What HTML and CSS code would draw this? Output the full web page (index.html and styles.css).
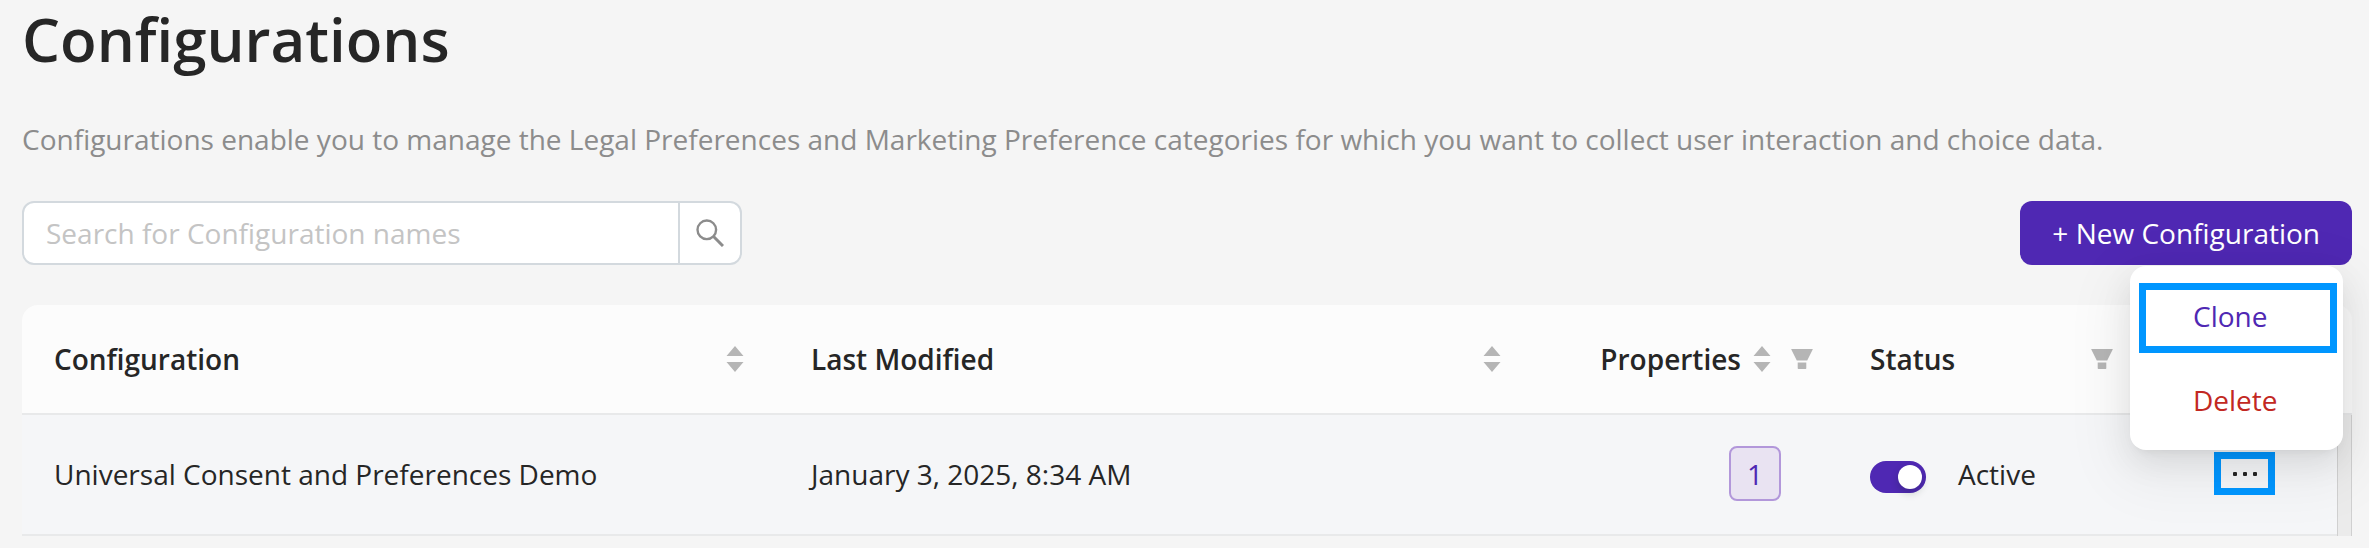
FILE: index.html
```
<!DOCTYPE html>
<html lang="en">
<head>
  <meta charset="UTF-8" />
  <meta name="viewport" content="width=device-width, initial-scale=1.0" />
  <title>Configurations</title>
  <link rel="stylesheet" href="styles.css">
</head>
<body>
  <svg width="0" height="0" class="sprite" aria-hidden="true">
    <symbol id="sort" viewBox="0 0 18 26">
      <path d="M9 0L17.500 10H.5zM.5 16h17L9 26z" />
    </symbol>
    <symbol id="filter" viewBox="0 0 22 20">
      <path d="M.4 0h21.200q.3.200.1.500L16.200 11.500H5.800L.3.500Q.1.200.4 0zM6.700 13.600h8.600v5.700q0 .7-.7.700H7.400q-.7 0-.7-.7z" />
    </symbol>
  </svg>

  <h1>Configurations</h1>
  <p class="description">Configurations enable you to manage the Legal Preferences and Marketing Preference categories for which you want to collect user interaction and choice data.</p>

  <div class="toolbar">
    <form class="search">
      <input type="text" placeholder="Search for Configuration names" aria-label="Search for Configuration names">
      <button type="button" aria-label="Search">
        <svg width="28" height="28" viewBox="0 0 28 28" fill="none" stroke="#8c8c8c" stroke-width="2.4">
          <circle cx="10.8" cy="10.800" r="9.300" />
          <path d="M17.300 17.300L27 27" stroke-width="3" />
        </svg>
      </button>
    </form>
    <button type="button" class="new-button">+ New Configuration</button>
  </div>

  <table>
    <colgroup>
      <col>
      <col>
      <col class="col-properties">
      <col class="col-status">
      <col class="col-actions">
      <col class="col-scroll">
    </colgroup>
    <thead>
      <tr>
        <th>
          <div class="head">Configuration <svg class="sort"><use href="#sort" /></svg></div>
        </th>
        <th>
          <div class="head">Last Modified <svg class="sort"><use href="#sort" /></svg></div>
        </th>
        <th>
          <div class="head head-right">Properties <svg class="sort"><use href="#sort" /></svg><svg class="filter"><use href="#filter" /></svg></div>
        </th>
        <th>
          <div class="head">Status <svg class="filter"><use href="#filter" /></svg></div>
        </th>
        <th></th>
        <th></th>
      </tr>
    </thead>
    <tbody>
      <tr>
        <td>Universal Consent and Preferences Demo</td>
        <td>January 3, 2025, 8:34 AM</td>
        <td><div class="properties"><span class="count">1</span></div></td>
        <td>
          <label class="status"><input type="checkbox" class="switch" checked> Active</label>
        </td>
        <td class="actions">
          <div class="dropdown">
            <button type="button" class="more" aria-label="More actions">
              <svg width="24" height="4" viewBox="0 0 24 4" fill="#262626">
                <rect width="4" height="4" rx="1" />
                <rect x="10" width="4" height="4" rx="1" />
                <rect x="20" width="4" height="4" rx="1" />
              </svg>
            </button>
            <div class="menu">
              <button type="button" class="clone">Clone</button>
              <button type="button" class="delete">Delete</button>
            </div>
          </div>
        </td>
        <td class="scroll-track"></td>
      </tr>
    </tbody>
  </table>
</body>
</html>
```

FILE: styles.css
```
* {
  box-sizing: border-box;
}
body {
  margin: 0;
  padding: 3px 17px 0 22px;
  background: #f5f5f5;
  color: #262626;
  font-family: "Open Sans", "Noto Sans", sans-serif;
  font-size: 28px;
  line-height: 38px;
}
button,
input {
  font: inherit;
}
button {
  cursor: pointer;
}
.sprite {
  position: absolute;
}
h1 {
  margin: 0;
  font-size: 60px;
  line-height: 72px;
  font-weight: 600;
}
.description {
  margin: 45px 0 43px;
  color: #8c8c8c;
}

/* search box and main button */
.toolbar {
  display: flex;
  justify-content: space-between;
  margin-bottom: 40px;
}
.search {
  display: flex;
  width: 720px;
  height: 64px;
  background: #fff;
  border: 2px solid #d3d9de;
  border-radius: 12px;
  overflow: hidden;
}
.search input {
  flex: 1;
  min-width: 0;
  padding: 0 22px;
  border: 0;
  background: none;
  outline: none;
}
.search input::placeholder {
  color: #c4c4c4;
}
.search button {
  display: flex;
  align-items: center;
  justify-content: center;
  width: 62px;
  padding: 0;
  background: none;
  border: 0;
  border-left: 2px solid #d3d9de;
}
.new-button {
  height: 64px;
  padding: 0 32px;
  background: #4f28b3;
  color: #fff;
  border: 0;
  border-radius: 12px;
}

/* table */
table {
  width: 100%;
  table-layout: fixed;
  border-collapse: separate;
  border-spacing: 0;
}
.col-properties {
  width: 302px;
}
.col-status {
  width: 310px;
}
.col-actions {
  width: 189px;
}
.col-scroll {
  width: 15px;
}
th {
  height: 110px;
  padding: 0 35px 0 32px;
  background: #fcfcfc;
  border-bottom: 2px solid #e8e9ea;
  font-weight: 600;
  text-align: left;
}
th:first-child {
  border-top-left-radius: 16px;
}
th:last-child {
  padding: 0;
  background: #fafafa;
  border-top-right-radius: 16px;
}
.head {
  display: flex;
  align-items: center;
  justify-content: space-between;
}
.head-right {
  justify-content: flex-end;
  gap: 12px;
  margin-right: -10px;
}
.sort {
  width: 18px;
  height: 26px;
  fill: #b5b5b5;
}
.filter {
  width: 22px;
  height: 20px;
  fill: #b5b5b5;
}
.head-right .filter {
  margin-left: 8px;
}
td {
  height: 121px;
  padding: 0 32px 2px;
  background: #f5f6f8;
  border-bottom: 2px solid #e8e9ea;
}
.properties {
  display: flex;
  justify-content: flex-end;
  margin-right: 25px;
}
.count {
  width: 52px;
  padding: 7px 0 6px;
  background: #e9e3f2;
  color: #4f28b3;
  border: 2px solid #b297da;
  border-radius: 8px;
  text-align: center;
}
.status {
  display: flex;
  align-items: center;
  gap: 32px;
}
.switch {
  appearance: none;
  display: flex;
  align-items: center;
  justify-content: flex-end;
  width: 56px;
  height: 32px;
  margin: 6px 0 0;
  padding: 4px;
  background: #4f28b3;
  border-radius: 16px;
}
.switch::before {
  content: "";
  width: 24px;
  height: 24px;
  background: #fff;
  border-radius: 50%;
  box-shadow: 0 4px 8px rgba(0, 35, 11, 0.2);
}
td.actions {
  padding: 0 0 2px 4px;
}
.dropdown {
  position: relative;
  width: 61px;
  margin: 0 auto;
}
.more {
  display: flex;
  align-items: center;
  justify-content: center;
  width: 61px;
  height: 43px;
  padding: 0;
  background: none;
  border: 7px solid #0096ff;
}
td.scroll-track {
  padding: 0;
  background: #ebebeb;
  border: 1px solid #d0d0d0;
  border-width: 0 1px;
}

/* row menu, opens above the button */
.menu {
  position: absolute;
  right: -68px;
  bottom: 45px;
  display: flex;
  flex-direction: column;
  gap: 14px;
  width: 213px;
  padding: 17px 6px 13px 9px;
  background: #fff;
  border-radius: 16px;
  box-shadow: 0 6px 12px -8px rgba(0, 0, 0, 0.12), 0 12px 32px rgba(0, 0, 0, 0.08), 0 18px 56px 16px rgba(0, 0, 0, 0.05);
}
.menu button {
  height: 70px;
  padding: 0 0 4px 47px;
  background: none;
  border: 7px solid transparent;
  text-align: left;
}
.menu .clone {
  color: #4f28b3;
  border-color: #0096ff;
}
.menu .delete {
  color: #c22822;
}
```
